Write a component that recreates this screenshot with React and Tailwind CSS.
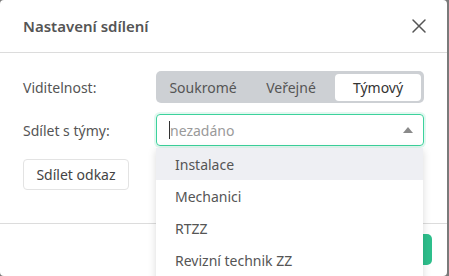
import React from "react";

export default function App() {
  return (
    <div className="w-[449px] h-[276px] bg-[#7a7a7a] overflow-hidden" style={{ fontFamily: '"Noto Sans", "Open Sans", sans-serif' }}>
      <div className="relative w-[447px] h-[276px] bg-white rounded-[4px] flex flex-col">
        <div className="h-[53px] flex items-center justify-between pl-[23px] pr-[20px] border-b border-[#dcdcdc] shrink-0">
          <span className="text-[15px] font-semibold text-[#555] leading-none pt-[1px]">Nastavení sdílení</span>
          <svg width="16" height="16" viewBox="0 0 16 16" className="text-[#555]">
            <path d="M2 2L14 14M14 2L2 14" stroke="currentColor" strokeWidth="1.5" strokeLinecap="round" />
          </svg>
        </div>
        <div className="flex-1 pl-[23px] pr-[23px] pt-[18px]">
          <div className="flex items-center h-[32px]">
            <span className="w-[133px] text-[14px] text-[#555]">Viditelnost:</span>
            <div className="flex-1 h-[32px] bg-[#cdd0d4] rounded-[5px] flex items-center px-[3px]">
              <div className="w-[88px] text-center text-[14px] text-[#555]">Soukromé</div>
              <div className="w-[88px] text-center text-[14px] text-[#555]">Veřejné</div>
              <div className="flex-1 h-[27px] bg-white rounded-[4px] flex items-center justify-center text-[14px] text-[#333]">Týmový</div>
            </div>
          </div>
          <div className="flex items-center h-[32px] mt-[11px]">
            <span className="w-[133px] text-[14px] text-[#555]">Sdílet s týmy:</span>
            <div className="flex-1 h-[32px] border border-[#3cd29c] rounded-[4px] shadow-[0_0_0_2px_rgba(60,210,156,0.15)] flex items-center pl-[12px] pr-[10px]">
              <span className="w-px h-[18px] bg-[#333]"></span>
              <span className="text-[14px] text-[#9a9a9a] flex-1">nezadáno</span>
              <svg width="10" height="6" viewBox="0 0 10 6"><path d="M0 6L5 0L10 6Z" fill="#8a8a8a" /></svg>
            </div>
          </div>
          <div className="mt-[13px]">
            <div className="w-[106px] h-[31px] border border-[#e3e3e3] rounded-[4px] flex items-center justify-center text-[14px] text-[#444]">Sdílet odkaz</div>
          </div>
        </div>
        <div className="h-[53px] border-t border-[#dcdcdc] shrink-0 flex items-start justify-end pt-[10px] pr-[15px]">
          <div className="w-[60px] h-[31px] bg-[#2ebf8c] rounded-[5px]"></div>
        </div>
        <div className="absolute left-[156px] top-[148px] w-[267px] h-[140px] bg-white shadow-[0_2px_8px_rgba(0,0,0,0.15)] flex flex-col text-[14px] text-[#555]">
          <div className="h-[32px] bg-[#eeeff3] flex items-center pl-[19px]">Instalace</div>
          <div className="h-[32px] flex items-center pl-[19px]">Mechanici</div>
          <div className="h-[32px] flex items-center pl-[19px]">RTZZ</div>
          <div className="h-[32px] flex items-center pl-[19px]">Revizní technik ZZ</div>
        </div>
      </div>
    </div>
  );
}
